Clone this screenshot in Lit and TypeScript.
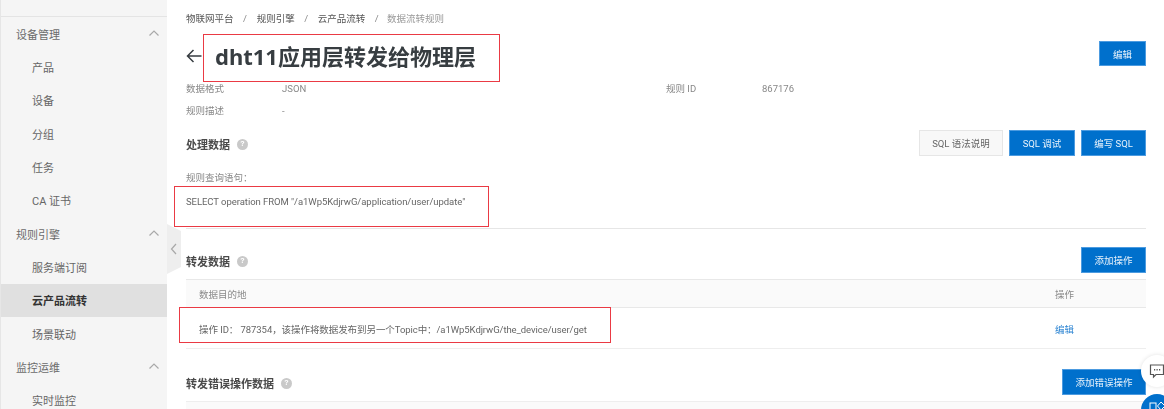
import { LitElement, html, css, svg } from "lit";
import { customElement } from "lit/decorators.js";

const chevUp = html`<svg class="chev" width="10" height="6" viewBox="0 0 10 6"><path d="M0.5 5.5 L5 1 L9.5 5.5" fill="none" stroke="#a9a9a9" stroke-width="1.2"/></svg>`;

const help = html`<span class="help">?</span>`;

@customElement("app-root")
export class AppRoot extends LitElement {
  static styles = css`
    :host {
      display: block;
      width: 1164px;
      height: 409px;
      overflow: hidden;
      position: relative;
      background: #fff;
      font-family: Roboto, "Noto Sans CJK SC", sans-serif;
      font-size: 9.5px;
      color: #666;
    }
    .page { display: flex; width: 1164px; height: 409px; filter: blur(0.45px); }
    aside {
      width: 167px;
      flex: none;
      height: 409px;
      background: #f5f5f5;
      border-left: 1px solid #e6e6e6;
      overflow: hidden;
      padding-top: 16px;
      box-sizing: border-box;
    }
    .topline { height: 1px; background: #e4e4e4; }
    .menu-row {
      height: 33.35px;
      display: flex;
      align-items: center;
      justify-content: space-between;
      font-size: 11px;
      color: #666;
    }
    .group { padding: 0 8px 0 15px; color: #6b6b6b; }
    .chev { margin-top: -2px; }
    .item { padding-left: 31px; }
    .item.active { background: #e0e0e0; color: #333; font-weight: 700; }
    main { flex: 1; padding: 0 18px 0 19px; min-width: 0; }
    .crumbs { height: 36px; display: flex; align-items: center; gap: 9.6px; color: #555; }
    .crumbs .sep { color: #888; }
    .crumbs .last { color: #999; margin-left: -1.5px; }
    .head { height: 40px; display: flex; align-items: center; }
    .back { margin-right: 13px; display: block; }
    h1 {
      margin: -1px 0 0;
      flex: 1;
      font-family: "Noto Sans", "Noto Sans CJK SC", sans-serif;
      font-size: 22px;
      line-height: 30px;
      font-weight: 700;
      color: #373d41;
    }
    .btn {
      height: 26px;
      box-sizing: border-box;
      display: inline-flex;
      align-items: center;
      justify-content: center;
      background: #0070cc;
      border: 1px solid #4c9be0;
      color: #e9f3fb;
      font-size: 9.5px;
    }
    .btn.edit { width: 47px; height: 25px; align-self: flex-start; margin-top: 5px; }
    .btn.w65 { width: 66px; }
    .btn.w64 { width: 65px; }
    .btn.w84 { width: 84px; }
    .btn.ghost { background: #f8f8f8; border-color: #e6e6e6; color: #666; }
    .meta {
      display: grid;
      grid-template-columns: 96px 384px 96px 1fr;
      grid-auto-rows: 22px;
      align-items: center;
      color: #888;
      margin-top: 1px;
    }
    .sec { display: flex; align-items: center; justify-content: space-between; height: 26px; }
    .sec-title { display: flex; align-items: center; gap: 7px; font-size: 11px; font-weight: 700; color: #4a4a4a; margin-top: 2px; }
    .help {
      width: 11px; height: 11px; border-radius: 50%;
      background: #c9c9c9; color: #fff; font-size: 8px; font-weight: 700;
      display: inline-flex; align-items: center; justify-content: center; line-height: 1;
    }
    .sec-btns { display: flex; gap: 6px; }
    .s1 { margin-top: 9px; }
    .query-label { margin-top: 13px; height: 16px; display: flex; align-items: center; color: #888; }
    .query { margin-top: 8px; height: 16px; display: flex; align-items: center; color: #666; letter-spacing: -0.05px; }
    .divider { margin-top: 19px; height: 1px; background: #e6e6e6; }
    .s2 { margin-top: 18px; }
    .thead {
      margin-top: 6px;
      height: 29px;
      box-sizing: border-box;
      background: #fafafa;
      border-top: 1px solid #e8e8e8;
      border-bottom: 1px solid #e8e8e8;
      display: flex;
      align-items: center;
      justify-content: space-between;
      padding: 0 0 0 13px;
      color: #8a8a8a;
    }
    .col-op { width: 91px; }
    .trow {
      height: 41px;
      box-sizing: border-box;
      border-bottom: 1px solid #eee;
      display: flex;
      align-items: center;
      justify-content: space-between;
      padding: 1px 0 0 13px;
      color: #666;
    }
    .trow-text { letter-spacing: -0.07px; }
    .link { color: #2f86d3; }
    .s3 { margin-top: 20px; }
    .thead2 { margin-top: 6px; height: 12px; background: #fafafa; border-top: 1px solid #eee; }

    .mark { position: absolute; box-sizing: border-box; border: 1.5px solid #ea3a44; filter: blur(0.3px); }
    .m-title { left: 203px; top: 34px; width: 297px; height: 48px; }
    .m-sql { left: 174px; top: 186px; width: 315px; height: 41px; }
    .m-row { left: 179px; top: 307px; width: 432px; height: 36px; }
    .tab { position: absolute; left: 167px; top: 224px; width: 14px; height: 50px; }
    .fab { position: absolute; width: 32px; height: 32px; border-radius: 50%; display: flex; align-items: center; justify-content: center; }
    .fab-chat { left: 1141px; top: 355px; background: #fff; box-shadow: 0 0 4px rgba(0,0,0,.12); }
    .fab-blue { left: 1141px; top: 394px; background: #0070cc; }
    .fab-blue svg { margin-top: -4px; }
  `;

  render() {
    const sub = (t: string, active = false) =>
      html`<div class="menu-row item ${active ? "active" : ""}">${t}</div>`;
    const grp = (t: string) => html`<div class="menu-row group"><span>${t}</span>${chevUp}</div>`;
    return html`
      <div class="page">
        <aside>
          <div class="topline"></div>
          ${grp("设备管理")}
          ${sub("产品")}${sub("设备")}${sub("分组")}${sub("任务")}${sub("CA 证书")}
          ${grp("规则引擎")}
          ${sub("服务端订阅")}${sub("云产品流转", true)}${sub("场景联动")}
          ${grp("监控运维")}
          ${sub("实时监控")}
        </aside>
        <main>
          <div class="crumbs">
            <span>物联网平台</span><span class="sep">/</span>
            <span>规则引擎</span><span class="sep">/</span>
            <span>云产品流转</span><span class="sep">/</span>
            <span class="last">数据流转规则</span>
          </div>
          <div class="head">
            <svg class="back" width="16" height="14" viewBox="0 0 16 14"><path d="M15.5 7 H1.5 M7.5 1 L1.5 7 L7.5 13" fill="none" stroke="#373d41" stroke-width="1.5"/></svg>
            <h1>dht11应用层转发给物理层</h1>
            <span class="btn edit">编辑</span>
          </div>
          <div class="meta">
            <span>数据格式</span><span>JSON</span><span>规则 ID</span><span>867176</span>
            <span>规则描述</span><span>-</span>
          </div>
          <div class="sec s1">
            <div class="sec-title">处理数据 ${help}</div>
            <div class="sec-btns">
              <span class="btn w84 ghost">SQL 语法说明</span>
              <span class="btn w65">SQL 调试</span>
              <span class="btn w64">编写 SQL</span>
            </div>
          </div>
          <div class="query-label">规则查询语句：</div>
          <div class="query">SELECT operation FROM "/a1Wp5KdjrwG/application/user/update"</div>
          <div class="divider"></div>
          <div class="sec s2">
            <div class="sec-title">转发数据 ${help}</div>
            <span class="btn w64">添加操作</span>
          </div>
          <div class="thead"><span>数据目的地</span><span class="col-op">操作</span></div>
          <div class="trow">
            <span class="trow-text">操作 ID： 787354，该操作将数据发布到另一个Topic中：/a1Wp5KdjrwG/the_device/user/get</span>
            <span class="col-op link">编辑</span>
          </div>
          <div class="sec s3">
            <div class="sec-title">转发错误操作数据 ${help}</div>
            <span class="btn w84">添加错误操作</span>
          </div>
          <div class="thead2"></div>
        </main>
      </div>
      <svg class="tab" viewBox="0 0 14 50"><path d="M0 0 L14 7 V43 L0 50 Z" fill="#eeeeee"/><path d="M9 20 L4.5 25 L9 30" fill="none" stroke="#a8a8a8" stroke-width="1.2"/></svg>
      <div class="mark m-title"></div>
      <div class="mark m-sql"></div>
      <div class="mark m-row"></div>
      <div class="fab fab-chat">
        <svg width="16" height="16" viewBox="0 0 16 16"><path d="M1.5 2 H14.5 V11.5 H7 L4.5 14 V11.5 H1.5 Z" fill="none" stroke="#555" stroke-width="1.2"/><path d="M5 6.7 h1.2 M7.5 6.7 h1.2 M10 6.7 h1.2" stroke="#555" stroke-width="1.4"/></svg>
      </div>
      <div class="fab fab-blue">
        <svg width="20" height="20" viewBox="0 0 20 20">${svg`<rect x="3" y="5" width="6" height="7" fill="none" stroke="#fff" stroke-width="1"/><path d="M14 4 L18 8 L14 12 L10.5 8 Z" fill="none" stroke="#fff" stroke-width="1"/>`}</svg>
      </div>
    `;
  }
}
